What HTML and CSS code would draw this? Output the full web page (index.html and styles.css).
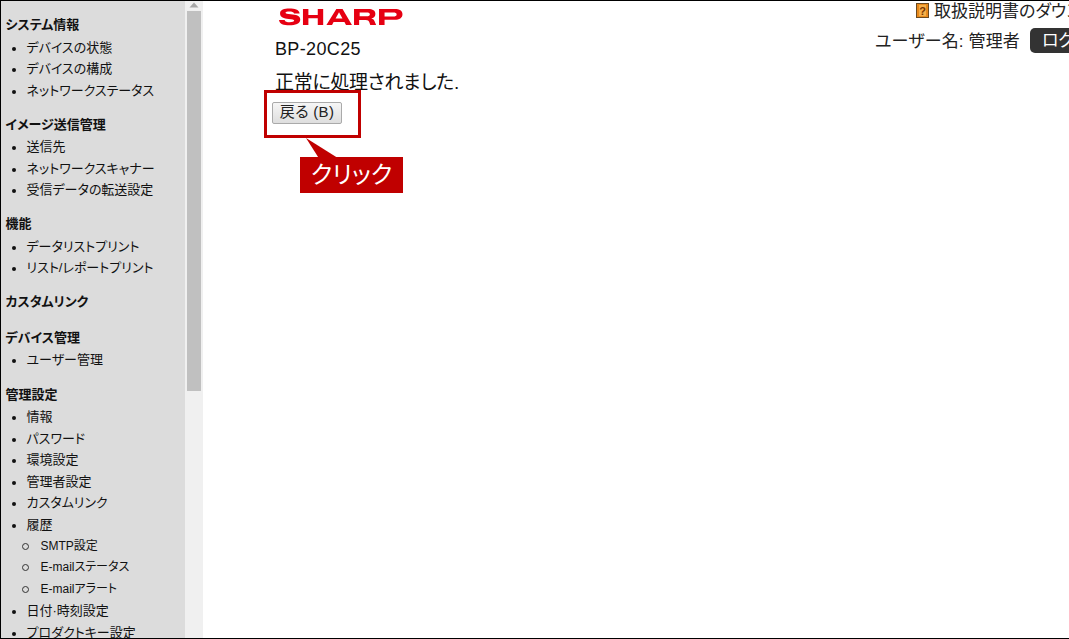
FILE: index.html
```html
<!DOCTYPE html>
<html lang="ja">
<head>
<meta charset="utf-8">
<title>BP-20C25</title>
<link rel="stylesheet" href="styles.css">
</head>
<body>
<div class="frame">
  <nav class="side">
    <h2>システム情報</h2>
    <ul><li>デバイスの状態</li><li>デバイスの構成</li><li>ネットワークステータス</li></ul>
    <h2>イメージ送信管理</h2>
    <ul><li>送信先</li><li>ネットワークスキャナー</li><li>受信データの転送設定</li></ul>
    <h2>機能</h2>
    <ul><li>データリストプリント</li><li>リスト/レポートプリント</li></ul>
    <h2>カスタムリンク</h2>
    <h2 class="solo">デバイス管理</h2>
    <ul><li>ユーザー管理</li></ul>
    <h2 class="after">管理設定</h2>
    <ul>
      <li>情報</li><li>パスワード</li><li>環境設定</li><li>管理者設定</li><li>カスタムリンク</li>
      <li>履歴
        <ul class="sub"><li>SMTP設定</li><li>E-mailステータス</li><li>E-mailアラート</li></ul>
      </li>
      <li>日付·時刻設定</li><li>プロダクトキー設定</li>
    </ul>
  </nav>
  <div class="scrollbar">
    <svg class="arrow" width="10" height="6" viewBox="0 0 10 6"><path d="M5 0.5 9.5 5.5H0.5Z" fill="#a6a6a6"/></svg>
    <div class="thumb"></div>
  </div>
  <main class="main">
    <div class="top-links">
      <div class="manual"><svg class="help" width="13" height="15" viewBox="0 0 13 15"><rect x="0.5" y="0.5" width="12" height="14" fill="#e8891c" stroke="#6b4a20"/><rect x="3" y="2" width="7" height="11" fill="#f5b04a"/><text x="6.500" y="12" font-size="11" font-family="Liberation Sans" text-anchor="middle" fill="#7a3300" font-weight="700">?</text></svg><span class="manual-text">取扱説明書のダウンロード</span></div>
      <div class="user"><span class="user-name">ユーザー名: 管理者</span><span class="logout">ログアウト</span></div>
    </div>
    <div class="content">
      <svg class="logo" width="124" height="18" viewBox="0 0 119 18" preserveAspectRatio="none"><g fill="#e60012"><path d="M1 5.2C1 1.8 5 .6 10 .6c5 0 9.200 1 9.800 4.800h-5.300C14 3.900 12.300 3.500 10 3.500c-2 0-3.800.3-3.800 1.300 0 1 1.700 1.100 5 1.500 5 .6 9.200 1.200 9.200 5.300 0 4.300-4.800 5.700-10.300 5.700C4.400 17.300.4 15.800 0 11.900h5.400c.5 1.800 2.300 2.400 4.900 2.400 2.300 0 4.300-.4 4.300-1.700 0-1.200-1.900-1.300-5.300-1.700C4.800 10.300 1 9.600 1 5.200Z"/><path d="M23 1h5.200v6h9V1h5.200v16h-5.200v-6.700h-9V17H23Z"/><path d="M55 1h6l9 16h-5.700l-1.500-3H52.400l-1.500 3h-5.400ZM54.300 10.600h6.600L57.600 4.300Z"/><path d="M72 1h13.500c4.500 0 7 1.500 7 4.900 0 2.500-1.500 3.900-4 4.500 2 .4 2.800 1.500 3.300 3l1.400 3.600h-5.600l-1-2.900c-.5-1.500-1.300-2.200-3.300-2.200h-6.400V17H72ZM77.400 4.400v3.900h6.800c1.900 0 3-.5 3-2s-1.100-1.900-3-1.900Z"/><path d="M96 1h14.800c5 0 7.700 1.700 7.700 5.300 0 3.700-2.900 5.500-7.600 5.500h-9.600V17H96ZM101.300 4.500v3.900h8.300c2 0 3.300-.5 3.300-2 0-1.400-1.300-1.900-3.300-1.900Z"/></g></svg>
      <div class="model">BP-20C25</div>
      <p class="msg">正常に処理されました.</p>
      <button class="back" type="button">戻る (B)</button>
    </div>
    <div class="mark"></div>
    <svg class="tail" width="42" height="22" viewBox="0 0 42 22"><path d="M3 0 38 22H17Z" fill="#c00000"/></svg>
    <div class="callout">クリック</div>
  </main>
</div>
</body>
</html>
```
FILE: styles.css
```css
* { box-sizing: border-box; }
html, body { margin: 0; height: 100%; background: #fff; }
body {
  font-family: "Liberation Sans", "Noto Sans CJK JP", sans-serif;
  font-feature-settings: "palt";
  color: #111;
  overflow: hidden;
}
.frame {
  width: 1069px;
  height: 639px;
  border: 1px solid #000;
  border-right: 0;
  display: flex;
  overflow: hidden;
}
.side {
  width: 184px;
  flex: none;
  height: 100%;
  overflow: hidden;
  background: #dcdcdc;
  padding: 14px 0 0 4.500px;
  font-size: 13px;
  line-height: 21.5px;
}
.side h2 { margin: 0; font: inherit; font-weight: 700; font-size: 13px; line-height: 20px; height: 21.5px; }
.side ul { margin: 0 0 13.5px; padding: 0 0 0 21px; list-style: none; }
.side li::before {
  content: "";
  display: inline-block;
  width: 4px;
  height: 4px;
  margin: 0 11px 0 -15px;
  border-radius: 50%;
  background: #111;
  vertical-align: 1px;
}
.side ul.sub { margin: 0; padding: 0.5px 0 0 12px; font-size: 12px; }
.side ul.sub li::before { width: 5px; height: 5px; margin: 0 12px 0 -17px; background: none; border: 1px solid #333; vertical-align: 0; }
.side h2.solo { margin-top: 14px; }
.side h2.after { margin-top: 14px; }
.scrollbar {
  width: 18px;
  flex: none;
  background: #f0f0f0;
  position: relative;
  padding: 1px 2px 0;
}
.arrow { display: block; margin: 0 auto; }
.thumb { width: 14px; height: 380px; background: #c0c0c0; margin-top: 3px; }
.main { flex: 1; position: relative; min-width: 0; overflow: hidden; }
.top-links {
  position: absolute;
  top: 0;
  left: 672px;
  width: 340px;
  font-size: 17px;
  color: #222;
}
.manual { display: flex; align-items: center; gap: 5px; margin-left: 41px; height: 19px; white-space: nowrap; }
.manual-text { margin-top: -3px; }
.user { display: flex; align-items: center; gap: 10px; margin-top: 8px; white-space: nowrap; }
.user-name { margin-top: -3px; letter-spacing: 0.15px; }
.logout {
  background: #333;
  color: #fff;
  border-radius: 5px;
  padding: 0 12px;
  height: 25px;
  line-height: 25px;
}
.content { padding: 7px 0 0 72px; }
.logo { display: block; margin-left: 4px; }
.model { font-size: 18px; line-height: 24px; margin-top: 11px; letter-spacing: 0.35px; }
.msg { margin: 9px 0 0; font-size: 19px; line-height: 26px; letter-spacing: -0.3px; }
.back {
  display: block;
  margin: 6px 0 0 -3px;
  width: 70px;
  height: 22px;
  padding: 0 0 4px;
  font: inherit;
  font-feature-settings: "palt";
  font-size: 15px;
  line-height: 18px;
  letter-spacing: 0.3px;
  color: #222;
  background: linear-gradient(#f6f6f6, #dedede);
  border: 1px solid #aaa;
  border-radius: 2px;
}
.mark {
  position: absolute;
  left: 61px;
  top: 89px;
  width: 97px;
  height: 48px;
  border: 3px solid #c00000;
}
.tail { position: absolute; left: 100px; top: 137px; }
.callout {
  position: absolute;
  left: 97px;
  top: 156px;
  width: 103px;
  height: 36px;
  background: #c00000;
  color: #fff;
  font-size: 24px;
  font-weight: 400;
  line-height: 36px;
  text-align: center;
}
```
